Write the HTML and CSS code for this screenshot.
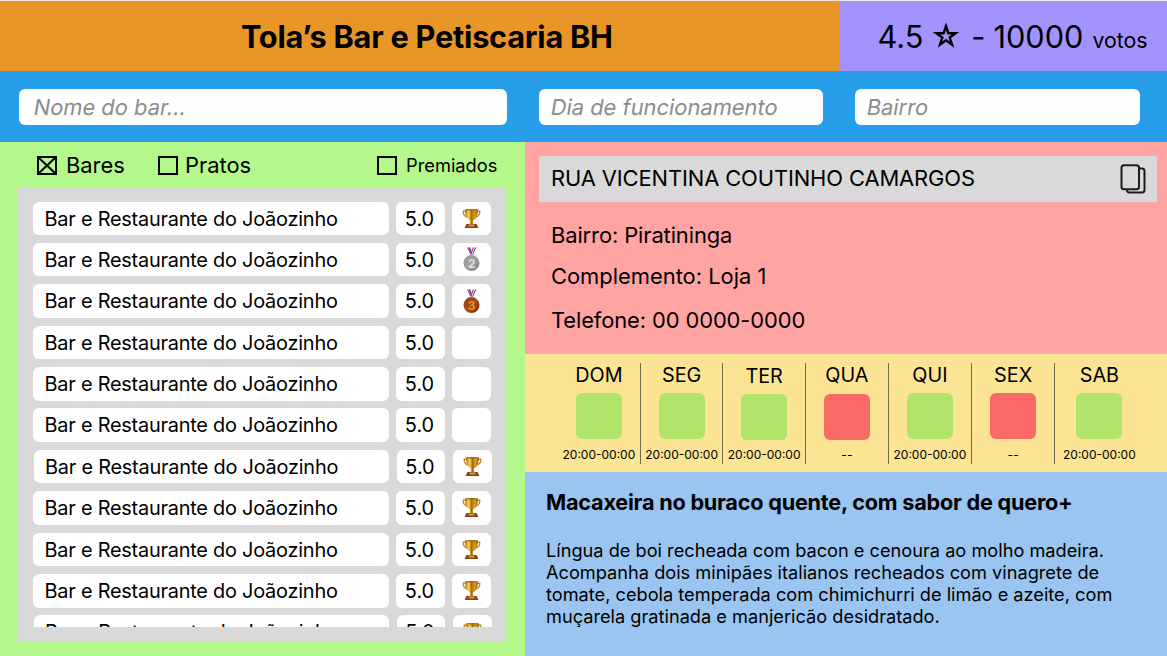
FILE: index.html
```
<!DOCTYPE html>
<html lang="pt-BR">
<head>
<meta charset="utf-8">
<title>Tola’s Bar e Petiscaria BH</title>
<link rel="stylesheet" href="styles.css">
</head>
<body>
<svg class="defs" aria-hidden="true">
  <defs>
    <linearGradient id="gold" x1="0" x2="1"><stop offset="0" stop-color="#9a6505"/><stop offset=".28" stop-color="#f9d860"/><stop offset=".5" stop-color="#a86c06"/><stop offset=".75" stop-color="#dda01c"/><stop offset="1" stop-color="#8f5a05"/></linearGradient>
    <linearGradient id="silver" x1="0" x2="1" y2="1"><stop offset="0" stop-color="#8c8c8c"/><stop offset=".5" stop-color="#a4a4a4"/><stop offset="1" stop-color="#7d7d7d"/></linearGradient>
    <linearGradient id="bronze" x1="0" x2="1" y2="1"><stop offset="0" stop-color="#8a3d0b"/><stop offset=".5" stop-color="#a8500f"/><stop offset="1" stop-color="#6f2c05"/></linearGradient>
    <symbol id="trophy" viewBox="0 0 20 22">
      <path d="M4.500 3.200H1.300c-.3 3.200 1.600 5.800 5.200 6.600M15.500 3.200h3.200c.3 3.200-1.600 5.800-5.200 6.600" fill="none" stroke="#b98220" stroke-width="1.300"/>
      <path d="M3.200 1.500h13.600c0 6.200-1.800 10-5.300 11.600v3.300h1.700l1.200 1.800H5.600l1.200-1.800h1.700v-3.300C5 11.500 3.200 7.700 3.200 1.500z" fill="url(#gold)"/>
      <ellipse cx="10" cy="1.700" rx="6.800" ry=".8" fill="#9c6a10"/>
      <path d="M4.600 16.700h10.800l1.800 4.300H2.800z" fill="#8b4216"/>
      <path d="M7 17.400h6v1.900H7z" fill="#e0a43a"/>
    </symbol>
    <symbol id="ribbon" viewBox="0 0 18 26">
      <path d="M4.400 0h1.600l3 8H7.700z" fill="#d8455c"/><path d="M6 0h1.700l2 6L9 8z" fill="#2438a8"/>
      <path d="M7.700 0h1l.9 3-.6 2z" fill="#e8ebfa"/>
      <path d="M12 0h-1.600L8.300 6 9 8z" fill="#e03048"/><path d="M13 0h-1L9 8h.7z" fill="#f3f3fc"/><path d="M14.200 0H13L9.600 8h1z" fill="#3449b4"/>
    </symbol>
    <symbol id="silver-medal" viewBox="0 0 18 26">
      <use href="#ribbon" width="18" height="26"/><circle cx="9" cy="16.800" r="8.500" fill="url(#silver)"/>
      <text x="9" y="21.500" class="medal-number" fill="#dedede">2</text>
    </symbol>
    <symbol id="bronze-medal" viewBox="0 0 18 26">
      <use href="#ribbon" width="18" height="26"/><circle cx="9" cy="16.800" r="8.500" fill="url(#bronze)"/>
      <text x="9" y="21.500" class="medal-number" fill="#e58a3c">3</text>
    </symbol>
  </defs>
</svg>
<div class="app">
  <header class="header">
    <h1 class="title">Tola’s Bar e Petiscaria BH</h1>
    <div class="rating">
      <span>4.5</span>
      <svg class="star" viewBox="0 0 26 26"><path d="M13 3.200l2.300 7h7.300l-5.900 4.300 2.300 7.100-6-4.400-6 4.400 2.300-7.100L3.400 10.200h7.300z" fill="none" stroke="#000" stroke-width="2.400"/></svg>
      <span class="dash">-</span>
      <span class="count">10000</span>
      <small class="votes">votos</small>
    </div>
  </header>
  <form class="filters">
    <div class="field field-name"><span class="placeholder">Nome do bar...</span></div>
    <div class="field field-day"><span class="placeholder">Dia de funcionamento</span></div>
    <div class="field field-area"><span class="placeholder">Bairro</span></div>
  </form>
  <main class="main">
    <section class="browse">
      <div class="options">
        <div class="option"><svg class="check" viewBox="0 0 20 19"><path d="M1 1h18v17H1zM1.500 1.500l17 16M18.500 1.500l-17 16"/></svg>Bares</div>
        <div class="option option-dishes"><svg class="check" viewBox="0 0 20 19"><path d="M1 1h18v17H1z"/></svg>Pratos</div>
        <div class="option option-awarded"><svg class="check" viewBox="0 0 20 19"><path d="M1 1h18v17H1z"/></svg><span>Premiados</span></div>
      </div>
      <div class="panel">
        <div class="list">
          <div class="row"><div class="name">Bar e Restaurante do Joãozinho</div><div class="score">5.0</div><div class="award"><svg class="trophy"><use href="#trophy"/></svg></div></div>
          <div class="row"><div class="name">Bar e Restaurante do Joãozinho</div><div class="score">5.0</div><div class="award"><svg class="medal"><use href="#silver-medal"/></svg></div></div>
          <div class="row"><div class="name">Bar e Restaurante do Joãozinho</div><div class="score">5.0</div><div class="award"><svg class="medal"><use href="#bronze-medal"/></svg></div></div>
          <div class="row"><div class="name">Bar e Restaurante do Joãozinho</div><div class="score">5.0</div><div class="award"></div></div>
          <div class="row"><div class="name">Bar e Restaurante do Joãozinho</div><div class="score">5.0</div><div class="award"></div></div>
          <div class="row"><div class="name">Bar e Restaurante do Joãozinho</div><div class="score">5.0</div><div class="award"></div></div>
          <div class="row row-offset"><div class="name">Bar e Restaurante do Joãozinho</div><div class="score">5.0</div><div class="award"><svg class="trophy"><use href="#trophy"/></svg></div></div>
          <div class="row"><div class="name">Bar e Restaurante do Joãozinho</div><div class="score">5.0</div><div class="award"><svg class="trophy"><use href="#trophy"/></svg></div></div>
          <div class="row"><div class="name">Bar e Restaurante do Joãozinho</div><div class="score">5.0</div><div class="award"><svg class="trophy"><use href="#trophy"/></svg></div></div>
          <div class="row"><div class="name">Bar e Restaurante do Joãozinho</div><div class="score">5.0</div><div class="award"><svg class="trophy"><use href="#trophy"/></svg></div></div>
          <div class="row row-offset"><div class="name">Bar e Restaurante do Joãozinho</div><div class="score">5.0</div><div class="award"><svg class="trophy"><use href="#trophy"/></svg></div></div>
        </div>
      </div>
    </section>
    <section class="details">
      <div class="contact">
        <div class="address"><span>RUA VICENTINA COUTINHO CAMARGOS</span>
          <svg class="copy" viewBox="0 0 26 30"><path d="M19.500 4.500h2.500q2.500 0 2.500 2.500v19q0 2.500-2.500 2.500H9.500q-2.500 0-2.500-2.500" fill="none" stroke="#1c1c1c" stroke-width="2"/><rect x="1.500" y="1.200" width="17.500" height="24" rx="2.500" fill="none" stroke="#1c1c1c" stroke-width="2"/></svg>
        </div>
        <p class="info info-area">Bairro: Piratininga</p>
        <p class="info info-extra">Complemento: Loja 1</p>
        <p class="info">Telefone: 00 0000-0000</p>
      </div>
      <div class="week">
        <div class="day"><b class="label">DOM</b><i class="status open"></i><span class="hours">20:00-00:00</span></div>
        <div class="day"><b class="label">SEG</b><i class="status open"></i><span class="hours">20:00-00:00</span></div>
        <div class="day low"><b class="label">TER</b><i class="status open"></i><span class="hours">20:00-00:00</span></div>
        <div class="day mid"><b class="label">QUA</b><i class="status closed"></i><span class="hours">--</span></div>
        <div class="day"><b class="label">QUI</b><i class="status open"></i><span class="hours">20:00-00:00</span></div>
        <div class="day"><b class="label">SEX</b><i class="status closed"></i><span class="hours">--</span></div>
        <div class="day"><b class="label">SAB</b><i class="status open"></i><span class="hours">20:00-00:00</span></div>
      </div>
      <article class="dish">
        <h2 class="dish-title">Macaxeira no buraco quente, com sabor de quero+</h2>
        <p class="dish-text">Língua de boi recheada com bacon e cenoura ao molho madeira.<br>Acompanha dois minipães italianos recheados com vinagrete de<br>tomate, cebola temperada com chimichurri de limão e azeite, com<br>muçarela gratinada e manjericão desidratado.</p>
      </article>
    </section>
  </main>
</div>
</body>
</html>
```
FILE: styles.css
```
* { box-sizing: border-box; }
body { margin: 0; font-family: Inter, "Liberation Sans", sans-serif; font-weight: 380; color: #000; overflow: hidden; }
.defs { display: block; width: 0; height: 0; }
.app { width: 1167px; height: 656px; display: flex; flex-direction: column; border-top: 1px solid #ece8df; overflow: hidden; }

.header { display: flex; height: 70px; flex: none; }
.title { margin: 0; width: 839.500px; padding: 16px 0 0 241px; background: #e89627; font-size: 30.700px; letter-spacing: -.23px; line-height: 40px; font-weight: 700; white-space: nowrap; }
.rating { flex: 1; display: flex; align-items: baseline; padding: 16px 0 0 38px; background: #a393ff; font-size: 30.700px; line-height: 40px; white-space: nowrap; }
.star { width: 26px; height: 26px; margin-left: 10px; align-self: flex-start; margin-top: 6px; }
.dash { margin-left: 12px; }
.count { margin-left: 8px; }
.votes { font-size: 21.300px; margin-left: 9px; }

.filters { display: flex; flex: none; height: 71px; padding: 18px 0 0 19px; background: #279ee9; }
.field { height: 36px; border-radius: 6px; background: #fff; color: #8c8c8c; font-size: 21.900px; line-height: 36px; white-space: nowrap; }
.placeholder { display: inline-block; transform: skewX(-9.500deg); }
.field-name { width: 488px; padding-left: 15px; }
.field-day { width: 284px; margin-left: 32px; padding-left: 12px; }
.field-area { width: 285px; margin-left: 32px; padding-left: 12px; }

.main { display: flex; flex: 1; min-height: 0; }
.browse { width: 525px; background: #b4f88c; padding-left: 18px; }
.options { display: flex; height: 45px; padding: 0 0 0 19px; font-size: 21.900px; line-height: 46px; }
.option { display: flex; align-items: center; gap: 9px; width: 87px; height: 46px; }
.option-dishes { margin-left: 34px; gap: 7px; width: 94px; }
.option-awarded { margin-left: 125px; font-size: 18.300px; gap: 9px; width: 122px; }
.check { flex: none; width: 20px; height: 19px; fill: none; stroke: #000; stroke-width: 2; }
.panel { width: 488px; height: 454px; padding: 14.500px 0 0 15px; background: #d9d9d9; }
.list { height: 425px; display: flex; flex-direction: column; gap: 7.900px; overflow: hidden; }
.row { display: flex; flex: none; height: 33.500px; gap: 7.500px; font-size: 19.900px; line-height: 34.500px; }
.row-offset { padding-left: .5px; }
.name, .score, .award { background: #fff; border-radius: 6px; }
.name { width: 355.500px; padding-left: 11.500px; letter-spacing: -.22px; white-space: nowrap; }
.score { width: 48.500px; text-align: center; padding-right: 1.500px; }
.award { width: 39px; display: flex; align-items: center; justify-content: center; }
.trophy { width: 19px; height: 21px; }
.medal { width: 17px; height: 25px; }
.medal-number { font-size: 13px; font-weight: 700; text-anchor: middle; }

.details { flex: 1; display: flex; flex-direction: column; background: #99c5f0; }
.contact { height: 212px; padding: 14px 10px 0 14px; background: #ffa3a3; }
.address { display: flex; align-items: center; justify-content: space-between; height: 45.500px; padding: 0 11px 0 12px; background: #d9d9d9; font-size: 21.900px; letter-spacing: -.1px; line-height: 28px; white-space: nowrap; }
.address span { padding-bottom: 1px; }
.copy { width: 26px; height: 30px; }
.info { margin: 0 0 0 12px; font-size: 21.900px; letter-spacing: -.1px; line-height: 30px; }
.info-area { padding-top: 18.500px; }
.info-extra { padding: 11px 0 14px; letter-spacing: 0; }

.week { display: grid; grid-template-columns: 83px 82.500px 82.500px 83px 83px 83.500px 88px; height: 118px; padding: 9px 0 0 32.900px; background: #fbe594; }
.day { height: 101px; display: flex; flex-direction: column; align-items: center; border-right: 1px solid #746d4c; }
.day:last-child { border-right: 0; }
.label { font-size: 19.800px; line-height: 24px; font-weight: 380; }
.status { width: 46px; height: 46px; margin-top: 6px; border-radius: 6px; }
.open { background: #b1e569; }
.closed { background: #fb6969; }
.hours { margin-top: 8px; font-size: 12px; line-height: 16px; font-weight: 400; }
.low .label { padding-top: 1px; }
.low .hours, .mid .hours { margin-top: 7px; }
.mid .status { margin-top: 7px; }

.dish { padding: 17px 0 0 21px; }
.dish-title { margin: 0; font-size: 21.700px; letter-spacing: -.24px; line-height: 26px; font-weight: 700; white-space: nowrap; }
.dish-text { margin: 24px 0 0; font-size: 18.200px; line-height: 22px; white-space: nowrap; }
```
